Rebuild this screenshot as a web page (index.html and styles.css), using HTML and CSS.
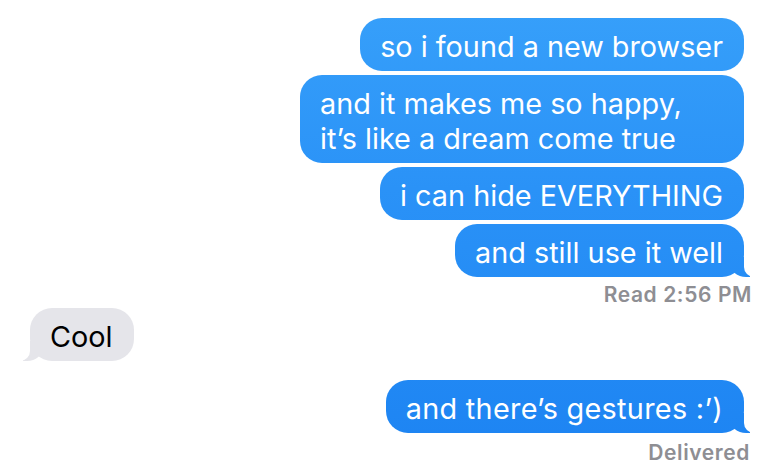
FILE: index.html
```html
<!DOCTYPE html>
<html>
<head>
<meta charset="utf-8">
<link rel="stylesheet" href="styles.css">
</head>
<body>
<div class="thread">
  <div class="msg sent">so i found a new browser</div>
  <div class="msg sent">and it makes me so happy, it’s like a dream come true</div>
  <div class="msg sent">i can hide EVERYTHING</div>
  <div class="msg sent tail">and still use it well</div>
  <div class="status">Read 2:56 PM</div>
  <div class="msg recv tail">Cool</div>
  <div class="msg sent tail gap wide">and there’s gestures :’)</div>
  <div class="status delivered">Delivered</div>
</div>
</body>
</html>
```

FILE: styles.css
```css
html, body {
  margin: 0;
  padding: 0;
  background: #ffffff;
}

body {
  font-family: Inter, "Noto Sans", "Liberation Sans", sans-serif;
  width: 768px;
  height: 472px;
  overflow: hidden;
}

.thread {
  display: flex;
  flex-direction: column;
  gap: 4px;
  padding: 18px 24px 0 30px;
}

.msg {
  position: relative;
  box-sizing: border-box;
  max-width: 444px;
  padding: 11px 21px 7px 20px;
  font-size: 28.8px;
  line-height: 35px;
  border-radius: 22px;
}

.sent {
  align-self: flex-end;
  color: #ffffff;
  background: linear-gradient(180deg, #37a0fa 0%, #2a92f7 40%, #1c83f2 100%) fixed;
}

.recv {
  align-self: flex-start;
  color: #000000;
  background: #e5e5ea;
}

.gap {
  margin-top: 15px;
}

.wide {
  letter-spacing: 0.3px;
}

.tail::before,
.tail::after {
  content: "";
  position: absolute;
  bottom: 0;
  height: 20px;
}

.sent.tail::before {
  right: -6px;
  width: 20px;
  background: linear-gradient(180deg, #37a0fa 0%, #2a92f7 40%, #1c83f2 100%) fixed;
  border-bottom-left-radius: 16px 14px;
}

.sent.tail::after {
  right: -26px;
  width: 26px;
  background: #ffffff;
  border-bottom-left-radius: 10px;
}

.recv.tail::before {
  left: -7px;
  width: 20px;
  background: #e5e5ea;
  border-bottom-right-radius: 16px 14px;
}

.recv.tail::after {
  left: -26px;
  width: 26px;
  background: #ffffff;
  border-bottom-right-radius: 10px;
}

.status {
  align-self: flex-end;
  margin-right: -8px;
  margin-top: 3px;
  margin-bottom: -2px;
  font-size: 21px;
  line-height: 22px;
  font-weight: 600;
  color: #8e8e93;
  letter-spacing: 0.6px;
}

.delivered {
  margin-top: 5px;
  margin-right: -6px;
}
```
